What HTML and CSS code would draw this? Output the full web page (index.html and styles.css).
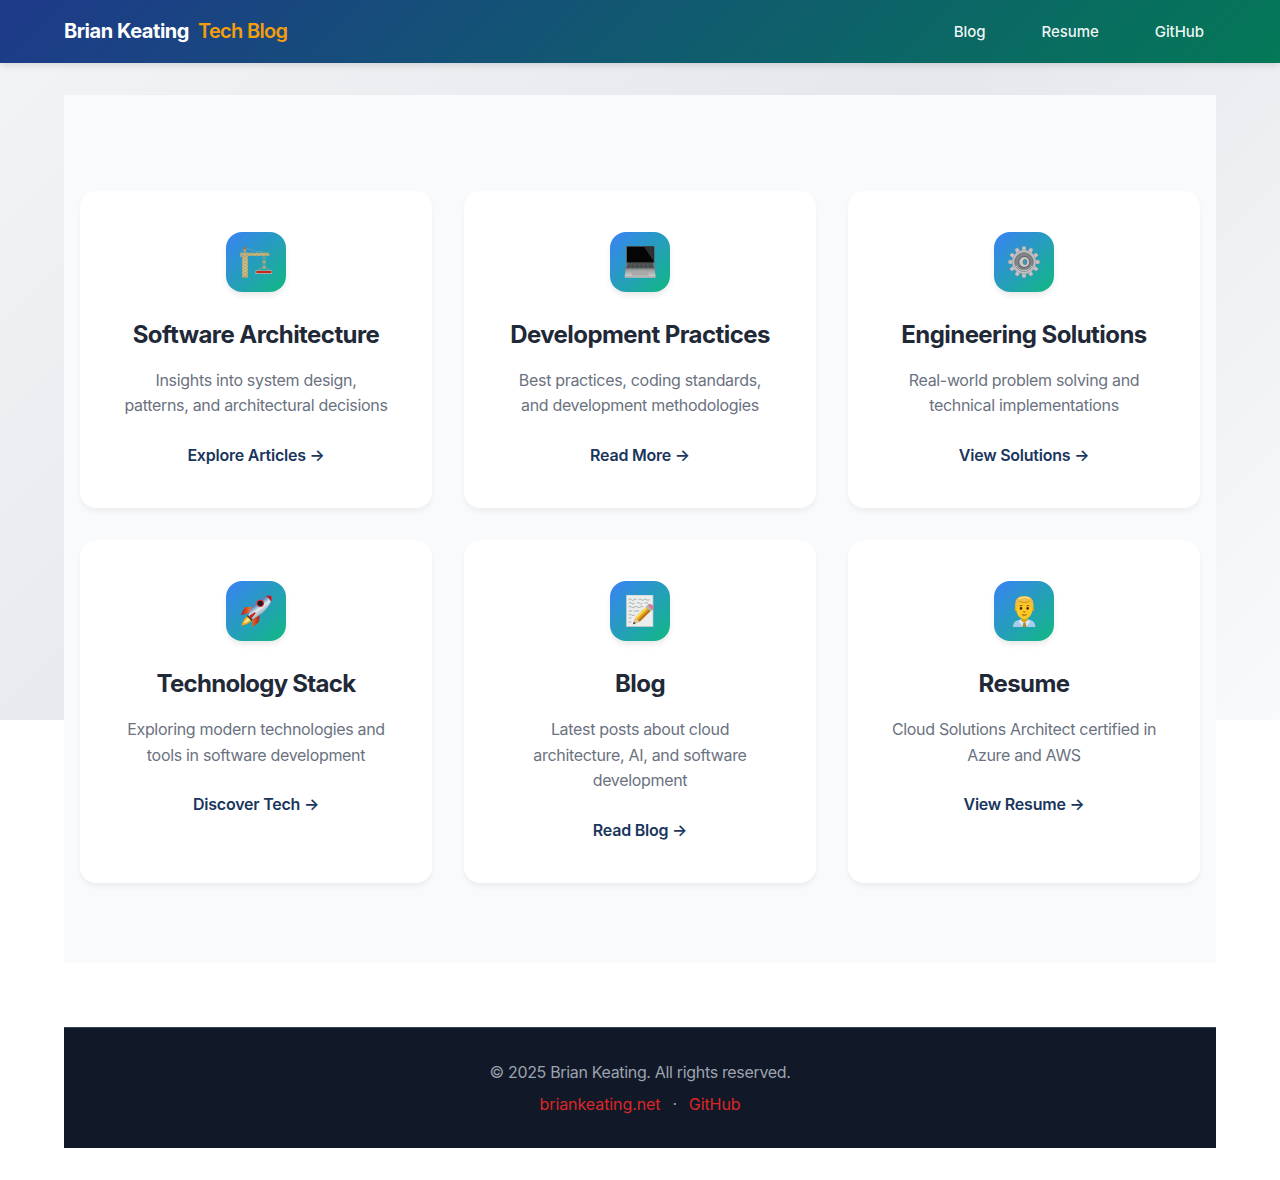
FILE: index.html
```html
<!DOCTYPE html>
<html lang="en">
<head>
<meta charset="utf-8">
<title>Brian Keating Tech Blog</title>
<link rel="stylesheet" href="styles.css">
</head>
<body>
<header class="site-header">
  <div class="brand"><span class="brand-name">Brian Keating</span><span class="brand-sub">Tech Blog</span></div>
  <nav class="nav"><a>Blog</a><a>Resume</a><a>GitHub</a></nav>
</header>
<div class="backdrop">
<main class="main">
  <article class="card">
    <div class="icon"><svg viewBox="0 0 96 96">
      <path d="M14 6L2 19M14 6L50 16L78 19" fill="none" stroke="#8fa9a5" stroke-width="1.5"/>
      <path d="M6 20H24V95H6zM0 20H88V30H0zM11 6h7v14h-7z" fill="#a9a577"/>
      <path d="M8 31l14 12-14 9 14 9-14 9 14 9-14 12M22 31L8 43l14 9-14 9 14 9-14 9 14 12M2 28l7-7 7 7 7-7 7 7 7-7 7 7 7-7 7 7 7-7 7 7 7-7 7 7" fill="none" stroke="#e8cf8b" stroke-width="2"/>
      <path d="M0 22h9v11H0z" fill="#aaa693"/><circle cx="14.500" cy="6" r="4" fill="#a06c2d"/>
      <path d="M69 29V62M75 29V62M72 62L50 75M72 62L94 75" fill="none" stroke="#a8a78b" stroke-width="2"/>
      <path d="M68 45h9v6h-9zM69 60h7v8h-7z" fill="#c4a46a"/>
      <path d="M46 73H96V84H46z" fill="#a8aaa4"/><path d="M49 75H94V81H49z" fill="#c42818"/>
    </svg></div>
    <h2>Software Architecture</h2>
    <p>Insights into system design,<br>patterns, and architectural decisions</p>
    <a class="more">Explore Articles <span class="arrow">→</span></a>
  </article>
  <article class="card">
    <div class="icon"><svg viewBox="0 0 96 96">
      <defs><linearGradient id="base" x2="0" y2="1"><stop stop-color="#999"/><stop offset="1" stop-color="#d5d5d5"/></linearGradient></defs>
      <rect x="6" width="86" height="53" rx="3" fill="#5b6264"/><rect x="9" y="2" width="80" height="48" fill="#050505"/>
      <path d="M60 2H89V46z" fill="#2d3134"/>
      <path d="M8 50H90L95 72H2z" fill="#74797a"/><path d="M12 52H86L89 66H8z" fill="#3c4042"/>
      <path d="M11 56H87M10 60H88M9 64H89M22 52l-3 14M34 52l-2 14M46 52v14M58 52l1 14M70 52l3 14" stroke="#767b7d" stroke-width="1"/>
      <path d="M5 70H92L95 93Q95 95 91 95H5Q1 95 2 91z" fill="url(#base)"/><path d="M27 74H70L73 88H24z" fill="#aaa" stroke="#969696"/>
      <path d="M3 93H94" stroke="#888" stroke-width="2"/>
    </svg></div>
    <h2>Development Practices</h2>
    <p>Best practices, coding standards,<br>and development methodologies</p>
    <a class="more">Read More <span class="arrow">→</span></a>
  </article>
  <article class="card">
    <div class="icon"><svg viewBox="0 0 96 96">
      <g stroke="#737578" stroke-width="1">
      <g fill="#c4c6c9" transform="translate(48 48)">
        <path id="tooth" d="M-7-32L-5-47H5L7-32zM-7 32L-5 47H5L7 32z"/>
        <use href="#tooth" transform="rotate(30)"/><use href="#tooth" transform="rotate(60)"/><use href="#tooth" transform="rotate(90)"/><use href="#tooth" transform="rotate(120)"/><use href="#tooth" transform="rotate(150)"/>
      </g>
      <circle cx="48" cy="48" r="36" fill="#bfc1c4"/></g>
      <circle cx="48" cy="48" r="28" fill="#818386" stroke="#65676a" stroke-width="2"/>
      <path d="M24 59A27 27 0 0 0 72 59" fill="none" stroke="#cacccd" stroke-width="3"/>
      <circle cx="49" cy="48" r="18" fill="#606366"/><circle cx="49" cy="48" r="15" fill="#c8cacb"/>
      <ellipse cx="51" cy="48" rx="6" ry="8" fill="#369cb7" stroke="#646b70" stroke-width="2"/>
    </svg></div>
    <h2>Engineering Solutions</h2>
    <p>Real-world problem solving and<br>technical implementations</p>
    <a class="more">View Solutions <span class="arrow">→</span></a>
  </article>
  <article class="card">
    <div class="icon"><svg viewBox="0 0 96 96">
      <defs><linearGradient id="hull" x1="0.2" y1="0.1" x2="0.8" y2="0.9"><stop stop-color="#568dbc"/><stop offset=".3" stop-color="#4f86b4"/><stop offset=".52" stop-color="#e2eaf0"/><stop offset="1" stop-color="#4c6c87"/></linearGradient><linearGradient id="flame" x2="1"><stop stop-color="#b71713"/><stop offset=".5" stop-color="#f87328"/><stop offset="1" stop-color="#b71713"/></linearGradient></defs>
      <path d="M39 35L15 37Q7 47 3 61L25 54zM60 56L56 81Q48 90 37 96L38 73z" fill="url(#flame)"/>
      <path d="M27 60Q11 67 4 92Q27 89 38 73z" fill="#f3a421"/><path d="M29 65Q17 70 10 86Q24 83 34 73z" fill="#ffe37b"/>
      <path d="M25 60Q37 20 66 7Q80 1 94 3Q96 18 87 31Q71 57 37 73z" fill="url(#hull)"/>
      <path d="M78 2Q88 0 94 3Q97 10 93 20Q88 10 78 2z" fill="#b81c22"/>
      <circle cx="61" cy="25" r="11" fill="#dc2524"/><circle cx="61" cy="25" r="8" fill="#201b22"/>
      <path d="M28 62L45 51L47 55L33 71z" fill="#c4221d"/><path d="M23 60L38 74L34 77L21 64z" fill="#352b37"/>
    </svg></div>
    <h2 class="tight">Technology Stack</h2>
    <p>Exploring modern technologies and<br>tools in software development</p>
    <a class="more">Discover Tech <span class="arrow">→</span></a>
  </article>
  <article class="card">
    <div class="icon"><svg viewBox="0 0 96 96">
      <rect x="7" y="0" width="80" height="95" fill="#eceded" stroke="#bfc4c3" stroke-width="2"/>
      <path d="M14 14q5-5 8 0t8 0 8 0M44 14q5-4 8 0t8 0 8 0 9 0M14 25q5-4 9 0t9 0M39 25q5-5 8 0t8 0M62 25q6-4 11 0M14 36q4-4 8 0t9 0 9 0 9 0 9 0M14 48h11m5 0h16m5 0h12M14 60q5-4 9 0t9 0M14 70q5-4 9 0M14 82q5-4 8 0" fill="none" stroke="#8b8f90" stroke-width="2"/>
      <path d="M27 88L34 68L69 33L82 46L47 80z" fill="#e4a020"/><path d="M34 68L69 33L73 37L38 72z" fill="#ffdb50"/><path d="M42 76L78 41L82 46L47 80z" fill="#b7741a"/>
      <path d="M27 88L34 68L47 80z" fill="#e5c39c"/><path d="M27 88L30 80L35 85z" fill="#282827"/>
      <path d="M65 36L72 29L87 42L80 49z" fill="#aab9bd"/><path d="M71 30Q79 23 88 33Q94 40 85 45z" fill="#dc7890"/>
    </svg></div>
    <h2>Blog</h2>
    <p>Latest posts about cloud<br>architecture, AI, and software<br>development</p>
    <a class="more">Read Blog <span class="arrow">→</span></a>
  </article>
  <article class="card">
    <div class="icon"><svg viewBox="0 0 96 96">
      <path d="M15 96Q15 79 30 76L40 72H58L68 76Q82 79 82 96z" fill="#a9cce9"/><path d="M40 67H58V78L49 87L40 78z" fill="#dca019"/>
      <path d="M37 75L49 84L42 93L32 79zM61 75L49 84L57 93L67 79z" fill="#d7eafa"/><path d="M46 83H53L55 96H44z" fill="#b8872d"/>
      <ellipse cx="24" cy="41" rx="4" ry="8" fill="#e7a71a"/><ellipse cx="74" cy="41" rx="4" ry="8" fill="#e7a71a"/>
      <path d="M25 26Q26 10 49 10T73 26V43Q72 70 49 73Q26 70 25 43z" fill="#ffc824"/>
      <path d="M22 36Q18 3 49 3T76 36L71 39Q71 27 65 21Q43 27 34 19Q28 27 27 39z" fill="#f0bd40"/><path d="M33 19Q47 27 65 20" fill="none" stroke="#b97c16" stroke-width="2"/><path d="M32 12Q47 3 65 11" fill="none" stroke="#ffe49a" stroke-width="4"/>
      <path d="M34 33q5-4 10 0M55 33q5-4 10 0" fill="none" stroke="#9c6712" stroke-width="3"/>
      <ellipse cx="39" cy="40" rx="3.500" ry="4.500" fill="#352411"/><ellipse cx="59" cy="40" rx="3.500" ry="4.500" fill="#352411"/>
      <path d="M46 50q3 3 6 0M42 59q7 3 14 0" fill="none" stroke="#8a4c10" stroke-width="3"/>
    </svg></div>
    <h2>Resume</h2>
    <p>Cloud Solutions Architect certified in<br>Azure and AWS</p>
    <a class="more">View Resume <span class="arrow">→</span></a>
  </article>
</main>
</div>
<footer class="footer">
  <p>© 2025 Brian Keating. All rights reserved.</p>
  <p class="links"><a>briankeating.net</a><span>·</span><a>GitHub</a></p>
</footer>
</body>
</html>
```
FILE: styles.css
```css
* { box-sizing: border-box; }
body {
  margin: 0;
  background: #fff;
  font: 16px/25.6px Inter, sans-serif;
}
.site-header {
  position: relative;
  display: flex;
  align-items: center;
  justify-content: space-between;
  height: 63px;
  padding: 0 76px 0 64px;
  background: linear-gradient(135deg, #1e3a8a, #047857);
  box-shadow: 0 4px 6px -1px rgba(0, 0, 0, .1);
}
.brand { display: flex; gap: 9px; font-size: 20px; }
.brand-name { color: #fff; font-weight: 650; letter-spacing: -.45px; }
.brand-sub { color: #f59e0b; font-weight: 560; letter-spacing: -.7px; }
.nav { display: flex; gap: 56px; color: rgba(255, 255, 255, .95); font-size: 15px; font-weight: 500; letter-spacing: -.05px; }
.backdrop {
  padding: 32px 64px 0;
  background: linear-gradient(135deg, #f3f4f6 0%, #e5e7eb 50%, #f9fafb 100%) 0 -63px / 100% 720px no-repeat;
}
.main {
  display: grid;
  grid-template-columns: repeat(3, 1fr);
  grid-template-rows: 317.2px 342.8px;
  gap: 32px;
  height: 868px;
  padding: 96px 16px 80px;
  background: #f9fafc;
}
.card {
  display: flex;
  flex-direction: column;
  align-items: center;
  padding-top: 41px;
  border-radius: 16px;
  background: #fff;
  box-shadow: 0 4px 6px -1px rgba(0, 0, 0, .06);
  text-align: center;
  white-space: nowrap;
}
.icon {
  display: flex;
  flex: none;
  align-items: center;
  justify-content: center;
  width: 60px;
  height: 60px;
  border-radius: 16px;
  background: linear-gradient(135deg, #3b82f6, #10b981);
  box-shadow: 0 4px 6px -1px rgba(0, 0, 0, .1);
}
.icon svg { width: 32px; height: 32px; }
h2 { margin: 24px 0 13.4px; color: #1f2937; font-size: 24px; font-weight: 680; line-height: 38.4px; letter-spacing: -.57px; }
h2.tight { letter-spacing: -.72px; }
p { margin: 0; }
.card p { color: #6b7280; letter-spacing: -.32px; }
.more { margin-top: 24px; color: #1a365d; font-weight: 600; letter-spacing: -.23px; }
.footer {
  margin: 64px 64px 0;
  height: 121px;
  padding-top: 32px;
  border-top: 1px solid #374151;
  background: #111827;
  color: #9ca3af;
  text-align: center;
  letter-spacing: -.33px;
}
.links { display: flex; justify-content: center; gap: 12px; margin-top: 6.4px; }
.links a { color: #dc2626; letter-spacing: -.08px; }
```
